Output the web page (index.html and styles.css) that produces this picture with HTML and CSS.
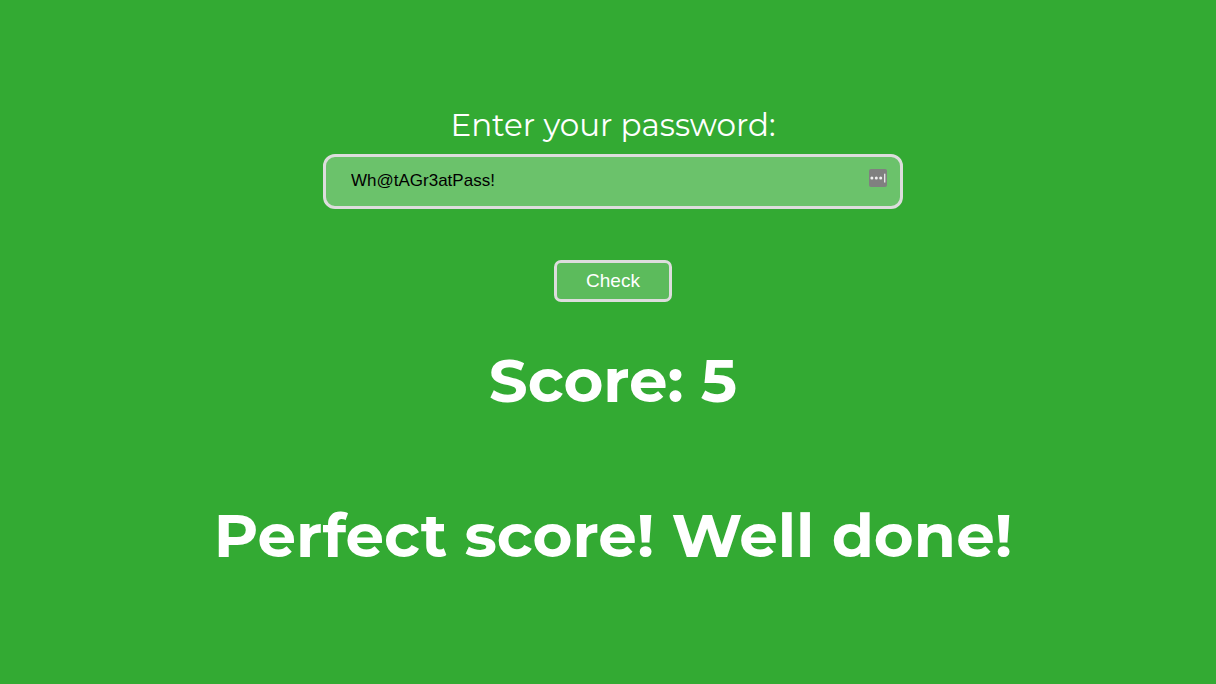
FILE: index.html
```html
<!DOCTYPE html>
<html lang="en">
<head>
<meta charset="utf-8">
<meta name="viewport" content="width=device-width, initial-scale=1">
<title>Password check</title>
<link rel="stylesheet" href="styles.css">
</head>
<body class="page">
<main class="checker">
  <form class="form" onsubmit="return false">
    <label class="label" for="password">Enter your password:</label>
    <div class="field">
      <input class="input" id="password" type="text" value="Wh@tAGr3atPass!" autocomplete="off" spellcheck="false">
      <svg class="manager" viewBox="0 0 18 18" aria-hidden="true">
        <rect width="18" height="18" rx="2" fill="#808080"/>
        <circle cx="2.9" cy="9" r="1.5" fill="#f0f0f0"/>
        <circle cx="7.3" cy="9" r="1.5" fill="#f0f0f0"/>
        <circle cx="11.7" cy="9" r="1.5" fill="#f0f0f0"/>
        <rect x="15" y="4.7" width="1.4" height="8.8" fill="#e4e4e4"/>
      </svg>
    </div>
    <button class="button" type="submit">Check</button>
  </form>
  <h1 class="result">Score: 5</h1>
  <h1 class="result">Perfect score! Well done!</h1>
</main>
</body>
</html>
```
FILE: styles.css
```css
* { box-sizing: border-box; }
.page {
  margin: 0;
  background: #33aa33;
  color: #fff;
  font-family: Montserrat, Inter, "Open Sans", sans-serif;
}
.checker {
  display: flex;
  flex-direction: column;
  align-items: center;
  padding: 106px 0 40px 10px;
}
.form {
  display: flex;
  flex-direction: column;
  align-items: center;
  width: 100%;
}
.label { font-size: 31px; line-height: 38px; }
.field {
  position: relative;
  width: 100%;
  max-width: 580px;
  margin-top: 10px;
}
.input {
  display: block;
  width: 100%;
  padding: 14px 48px 15px 25px;
  border: 3px solid #ddd;
  border-radius: 12px;
  background: #6bc26b;
  color: #000;
  font: 17px/20px "Liberation Sans", Arial, sans-serif;
}
.manager {
  position: absolute;
  top: 15px;
  right: 16px;
  width: 18px;
  height: 18px;
}
.button {
  margin-top: 51px;
  padding: 6px 29px;
  border: 3px solid #ddd;
  border-radius: 7px;
  background: #5cbb5c;
  color: #fff;
  font: 19px/24px "Liberation Sans", Arial, sans-serif;
}
.result {
  margin: 41px 0 39px;
  font-size: 61px;
  line-height: 75px;
  font-weight: 700;
  text-align: center;
}
```
